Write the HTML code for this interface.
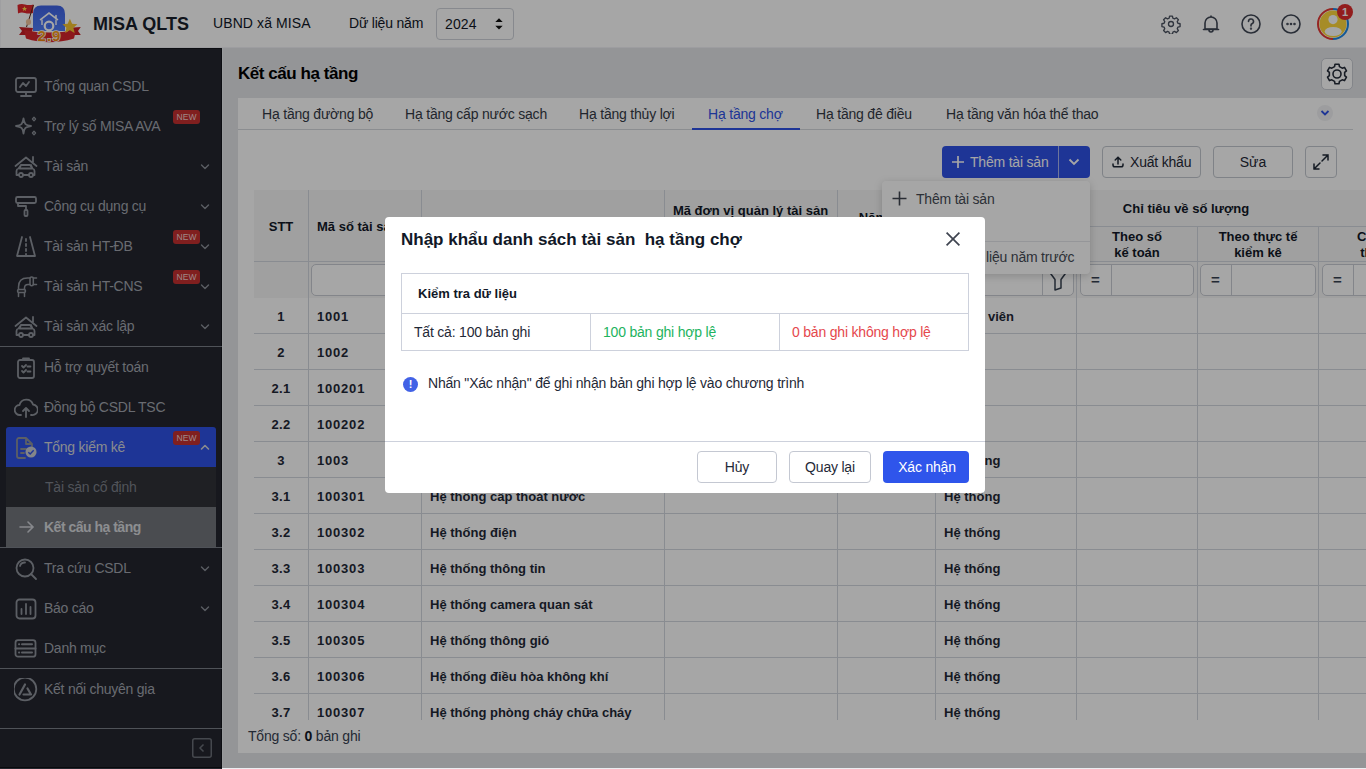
<!DOCTYPE html>
<html><head><meta charset="utf-8">
<style>
*{box-sizing:border-box;margin:0;padding:0}
html,body{width:1366px;height:769px;overflow:hidden;background:#fff;font-family:"Liberation Sans",sans-serif;color:#1f2937}
.a{position:absolute;white-space:nowrap}
#header{position:absolute;left:0;top:0;width:1366px;height:48px;background:#fff;border-bottom:1px solid #f1f2f6}
#side{position:absolute;left:0;top:48px;width:222px;height:721px;background:#24262e}
#content{position:absolute;left:222px;top:48px;width:1144px;height:721px;background:#e3e5e9}
.si{position:absolute;left:0;width:222px;height:40px;color:#a1a5ae;font-size:14px}
.si .t{position:absolute;left:44px;top:0;line-height:40px;letter-spacing:-.25px}
.si svg{position:absolute;left:14px;top:9px}
.si .chev{left:200px;top:17px}
.sdiv{position:absolute;left:0;width:222px;height:1px;background:#7a7e87}
.new{position:absolute;left:173px;top:4px;width:27px;height:14px;border-radius:3px;background:#c53030;color:#f3d0d0;font-size:8.5px;line-height:14px;text-align:center}
#overlay{position:absolute;left:0;top:0;width:1366px;height:768px;background:rgba(0,0,0,.35)}
#modal{position:absolute;left:385px;top:217px;width:600px;height:276px;background:#fff;border-radius:4px}
</style></head><body>
<div id="header">
<svg class="a" style="left:0;top:0" width="90" height="47" viewBox="0 0 90 47">
<defs><linearGradient id="lg1" x1="0" y1="0" x2="0" y2="1"><stop offset="0" stop-color="#3f63e6"/><stop offset="1" stop-color="#4f7cf6"/></linearGradient>
<linearGradient id="lg2" x1="0" y1="0" x2="0" y2="1"><stop offset="0" stop-color="#ffb020"/><stop offset="1" stop-color="#f07d0a"/></linearGradient></defs>
<path d="M17.5 5 Q21 3.5 25 4.5 Q29 5.5 33.5 4.5 L33 13 Q28.5 14 25 13 Q21 12 18 13.5 Z" fill="#e0262b"/>
<path d="M24.5 6.3 l.8 1.6 1.7.2 -1.3 1.1 .4 1.7 -1.6-.9 -1.6.9 .4-1.7 -1.3-1.1 1.7-.2z" fill="#ffd84a"/>
<line x1="33.5" y1="5" x2="26.5" y2="27" stroke="#5a2a16" stroke-width="1"/>
<ellipse cx="28.5" cy="22" rx="2.6" ry="3" fill="#f2c49d"/>
<path d="M33 14 Q33 5.5 41 5.5 H57 Q65 5.5 65 14 V31 H33 Z" fill="url(#lg1)"/>
<path d="M40.5 19.6 L49 13 L57.5 19.6 M56 15.5 v2.5" fill="none" stroke="#fff" stroke-width="1.6" stroke-linecap="round"/>
<path d="M42 19.5 V25 M56 19.5 V25" fill="none" stroke="#fff" stroke-width="1.4"/>
<circle cx="49" cy="26" r="4.3" fill="none" stroke="#fff" stroke-width="2.2"/>
<circle cx="49" cy="26" r="1.1" fill="#3f63e6"/>
<path d="M19 27 L33 28 L31 35 L19 35 L22 31 Z" fill="#c81e25"/>
<path d="M80.8 27 L67 28 L69 35 L80.8 35 L78 31 Z" fill="#c81e25"/>
<path d="M24 30 Q49 35 76 30 L74 38.5 Q49 46 26 38.5 Z" fill="#d7262b"/>
<path d="M69.9 18.8 l2.2 4.9 5.3.5 -4 3.6 1.2 5.2 -4.7-2.8 -4.7 2.8 1.2-5.2 -4-3.6 5.3-.5z" fill="#f6c330"/>
<text x="49.5" y="40.5" text-anchor="middle" font-family="Liberation Sans" font-weight="700" font-size="15" fill="url(#lg2)" stroke="#fff" stroke-width="1.5" paint-order="stroke" letter-spacing="1">2.9</text>
</svg>
<div class="a" style="left:93px;top:1px;line-height:47px;font-size:18px;font-weight:700;color:#1a1f2b;letter-spacing:0">MISA QLTS</div>
<div class="a" style="left:213px;top:0;line-height:47px;font-size:14px;color:#111827;letter-spacing:.1px">UBND xã MISA</div>
<div class="a" style="left:349px;top:0;line-height:47px;font-size:14px;color:#111827;letter-spacing:-.2px">Dữ liệu năm</div>
<div class="a" style="left:436px;top:8px;width:78px;height:32px;border:1px solid #cfd3da;border-radius:4px;background:#fff"></div>
<div class="a" style="left:445px;top:1px;line-height:47px;font-size:14px;color:#111827;letter-spacing:.1px">2024</div>
<svg class="a" style="left:494px;top:17px" width="10" height="14" viewBox="0 0 10 14"><path d="M1.3 5 L5 1.2 L8.7 5Z M1.3 8.8 L5 12.6 L8.7 8.8Z" fill="#111"/></svg>
<svg class="a" style="left:1161px;top:14px" width="20" height="20" viewBox="0 0 24 24" fill="none" stroke="#4b5260" stroke-width="1.6"><path d="M10.3 2.5h3.4l.6 2.6 1.9.8 2.3-1.4 2.4 2.4-1.4 2.3.8 1.9 2.6.6v3.4l-2.6.6-.8 1.9 1.4 2.3-2.4 2.4-2.3-1.4-1.9.8-.6 2.6h-3.4l-.6-2.6-1.9-.8-2.3 1.4-2.4-2.4 1.4-2.3-.8-1.9-2.6-.6v-3.4l2.6-.6.8-1.9-1.4-2.3 2.4-2.4 2.3 1.4 1.9-.8z" stroke-linejoin="round"/><circle cx="12" cy="12" r="3"/></svg>
<svg class="a" style="left:1201px;top:14px" width="20" height="20" viewBox="0 0 20 20" fill="none" stroke="#404755" stroke-width="1.6"><path d="M4 15 V9 a6 6 0 0 1 12 0 V15 Z" stroke-linejoin="round"/><path d="M2.5 15.5 H17.5" stroke-linecap="round"/><path d="M8 16 a2 2 0 0 0 4 0"/><path d="M10 1.5 V3"/></svg>
<svg class="a" style="left:1241px;top:14px" width="20" height="20" viewBox="0 0 20 20" fill="none" stroke="#404755" stroke-width="1.6"><circle cx="10" cy="10" r="9"/><path d="M7.5 7.5 a2.5 2.5 0 1 1 3.5 2.3 c-.7.3-1 .8-1 1.5 V12" stroke-linecap="round"/><circle cx="10" cy="14.6" r=".4" fill="#374151"/></svg>
<svg class="a" style="left:1281px;top:14px" width="20" height="20" viewBox="0 0 20 20" fill="none" stroke="#404755" stroke-width="1.6"><circle cx="10" cy="10" r="9"/><circle cx="6.5" cy="10" r=".5" fill="#374151"/><circle cx="10" cy="10" r=".5" fill="#374151"/><circle cx="13.5" cy="10" r=".5" fill="#374151"/></svg>
<svg class="a" style="left:1317px;top:8px" width="32" height="32" viewBox="0 0 32 32">
  <path d="M16 1 A15 15 0 0 1 16 31" fill="none" stroke="#1e88e5" stroke-width="2"/>
  <path d="M16 31 A15 15 0 0 1 16 1" fill="none" stroke="#e53935" stroke-width="2"/>
  <circle cx="16" cy="16" r="13.5" fill="#ffd83d"/>
  <circle cx="16" cy="11.6" r="4.6" fill="#fff"/>
  <ellipse cx="16.2" cy="23.5" rx="8.5" ry="4.6" fill="#fff"/>
</svg>
<div class="a" style="left:1337px;top:4px;width:16px;height:16px;border-radius:50%;background:#e02d2d;color:#fff;font-size:11px;font-weight:700;line-height:16px;text-align:center;font-family:'Liberation Sans',sans-serif">1</div>
</div>
<div id="side"><div class="a" style="left:0;top:0;width:222px;height:1px;background:#14161c"></div><div class="a" style="left:221px;top:0;width:1px;height:721px;background:#14161c"></div><div class="si" style="top:18px"><svg style="left:14px;top:9px" width="24" height="24" viewBox="0 0 24 24" fill="none" stroke="#8e929b" stroke-width="1.8" stroke-linecap="round" stroke-linejoin="round"><rect x="2" y="3" width="20" height="14" rx="2"/><path d="M12 17v4M7 21h10M6 12l3-4 3 3 3-4"/></svg><span class="t">Tổng quan CSDL</span></div><div class="si" style="top:58px"><svg style="left:14px;top:9px" width="24" height="24" viewBox="0 0 24 24" fill="none" stroke="#8e929b" stroke-width="1.8" stroke-linecap="round" stroke-linejoin="round"><path d="M9.5 3.5 C10.3 9 11.5 10.2 17 11 C11.5 11.8 10.3 13 9.5 18.5 C8.7 13 7.5 11.8 2 11 C7.5 10.2 8.7 9 9.5 3.5Z"/><path d="M20 2.2 l1.6 1.8 -1.6 1.8 -1.6-1.8z M20 16.2 l1.6 1.8 -1.6 1.8 -1.6-1.8z" stroke-width="1.2"/></svg><span class="t">Trợ lý số MISA AVA</span><span class="new">NEW</span></div><div class="si" style="top:98px"><svg style="left:14px;top:9px" width="24" height="24" viewBox="0 0 24 24" fill="none" stroke="#8e929b" stroke-width="1.8" stroke-linecap="round" stroke-linejoin="round"><path d="M1.5 11 L12 2.5 L22.5 11M19 2v5"/><path d="M2.5 20 v-4 q0-2 2-2.5 l2.5-3.5 h9 l2.5 3.5 q2 .5 2 2.5 v4 z M7 10 l-1.5 3.5 h13 L17 10"/><circle cx="7" cy="20" r="2" fill="#24262e"/><circle cx="17" cy="20" r="2" fill="#24262e"/></svg><span class="t">Tài sản</span><svg class="chev" width="10" height="8" viewBox="0 0 10 8"><path d="M1.5 2 L5 5.5 L8.5 2" fill="none" stroke="#8b8f98" stroke-width="1.4" stroke-linecap="round" stroke-linejoin="round"/></svg></div><div class="si" style="top:138px"><svg style="left:14px;top:9px" width="24" height="24" viewBox="0 0 24 24" fill="none" stroke="#8e929b" stroke-width="1.8" stroke-linecap="round" stroke-linejoin="round"><rect x="2" y="2" width="20" height="6" rx="1.5"/><path d="M4 8v3h8v4"/><rect x="10.5" y="15" width="3" height="6" rx="1"/></svg><span class="t">Công cụ dụng cụ</span><svg class="chev" width="10" height="8" viewBox="0 0 10 8"><path d="M1.5 2 L5 5.5 L8.5 2" fill="none" stroke="#8b8f98" stroke-width="1.4" stroke-linecap="round" stroke-linejoin="round"/></svg></div><div class="si" style="top:178px"><svg style="left:14px;top:9px" width="24" height="24" viewBox="0 0 24 24" fill="none" stroke="#8e929b" stroke-width="1.8" stroke-linecap="round" stroke-linejoin="round"><path d="M8 2 L3 21 H21 L16 2"/><path d="M12 4v2M12 9v2M12 14v2M12 19v1"/></svg><span class="t">Tài sản HT-ĐB</span><span class="new">NEW</span><svg class="chev" width="10" height="8" viewBox="0 0 10 8"><path d="M1.5 2 L5 5.5 L8.5 2" fill="none" stroke="#8b8f98" stroke-width="1.4" stroke-linecap="round" stroke-linejoin="round"/></svg></div><div class="si" style="top:218px"><svg style="left:14px;top:9px" width="24" height="24" viewBox="0 0 24 24" fill="none" stroke="#8e929b" stroke-width="1.8" stroke-linecap="round" stroke-linejoin="round"><g stroke-width="1.5"><path d="M4.5 14.5 V12 Q4.5 3 13.5 3 H16 M10.5 14.5 V13 Q10.5 9.5 14 9.5 H16"/><rect x="16" y="2" width="3.3" height="8.8" rx="1.5"/><path d="M19.3 3 H22.5 M19.3 9.5 H22.5"/><rect x="3.5" y="14.5" width="8" height="3" rx="1.5"/><path d="M4.5 17.5 V21.5 M10.5 17.5 V21.5"/></g></svg><span class="t">Tài sản HT-CNS</span><span class="new">NEW</span><svg class="chev" width="10" height="8" viewBox="0 0 10 8"><path d="M1.5 2 L5 5.5 L8.5 2" fill="none" stroke="#8b8f98" stroke-width="1.4" stroke-linecap="round" stroke-linejoin="round"/></svg></div><div class="si" style="top:258px"><svg style="left:14px;top:9px" width="24" height="24" viewBox="0 0 24 24" fill="none" stroke="#8e929b" stroke-width="1.8" stroke-linecap="round" stroke-linejoin="round"><path d="M1.5 11 L12 2.5 L22.5 11M19 2v5"/><path d="M2.5 20 v-4 q0-2 2-2.5 l2.5-3.5 h9 l2.5 3.5 q2 .5 2 2.5 v4 z M7 10 l-1.5 3.5 h13 L17 10"/><circle cx="7" cy="20" r="2" fill="#24262e"/><circle cx="17" cy="20" r="2" fill="#24262e"/></svg><span class="t">Tài sản xác lập</span><svg class="chev" width="10" height="8" viewBox="0 0 10 8"><path d="M1.5 2 L5 5.5 L8.5 2" fill="none" stroke="#8b8f98" stroke-width="1.4" stroke-linecap="round" stroke-linejoin="round"/></svg></div><div class="sdiv" style="top:298px"></div><div class="si" style="top:299px"><svg style="left:14px;top:9px" width="24" height="24" viewBox="0 0 24 24" fill="none" stroke="#8e929b" stroke-width="1.8" stroke-linecap="round" stroke-linejoin="round"><rect x="4" y="4" width="16" height="18" rx="2"/><path d="M9 4 V2.5 h6 V4 M8 10 l1.5 1.5 2.5-2.5 M13.5 10.5h3 M8 15 l1.5 1.5 2.5-2.5 M13.5 15.5h3"/></svg><span class="t">Hỗ trợ quyết toán</span></div><div class="si" style="top:339px"><svg style="left:14px;top:9px" width="24" height="24" viewBox="0 0 24 24" fill="none" stroke="#8e929b" stroke-width="1.8" stroke-linecap="round" stroke-linejoin="round"><path d="M7 19 H6 a5 5 0 0 1-.5-10 A7 7 0 0 1 19 8.5 a5 5 0 0 1-1 10.5 h-1"/><path d="M12 21 v-9 M9 15 l3-3 3 3"/></svg><span class="t">Đồng bộ CSDL TSC</span></div><div class="a" style="left:6px;top:379px;width:210px;height:40px;background:#2f52e6;border-radius:3px 3px 0 0"></div><div class="a" style="left:6px;top:419px;width:210px;height:80px;background:#303238"></div><div class="a" style="left:6px;top:459px;width:210px;height:40px;background:#72757c"></div><div class="si" style="top:379px;color:#d3d6dc"><svg style="left:13px;top:9px" width="24" height="24" viewBox="0 0 24 24" fill="none" stroke="#8e929b" stroke-width="1.8" stroke-linecap="round" stroke-linejoin="round"><path d="M13 2 H6 a2 2 0 0 0-2 2 v16 a2 2 0 0 0 2 2 h6 M13 2 l6 6 v4 M13 2 v6 h6 M8 13h5 M8 17h3"/></svg><svg style="left:25px;top:19px" width="12" height="12" viewBox="0 0 13 13"><circle cx="6.5" cy="6.5" r="6" fill="#c9ccd4"/><path d="M3.6 6.7 l2 2 3.8-4" fill="none" stroke="#2f52e6" stroke-width="1.5"/></svg><span class="t">Tổng kiểm kê</span><span class="new">NEW</span><svg class="chev" style="top:16px" width="10" height="8" viewBox="0 0 10 8"><path d="M1.5 6 L5 2.5 L8.5 6" fill="none" stroke="#d3d6dc" stroke-width="1.6" stroke-linecap="round" stroke-linejoin="round"/></svg></div><div class="a" style="left:45px;top:419px;line-height:40px;font-size:14px;color:#7d818a;letter-spacing:-.22px">Tài sản cố định</div><svg class="a" style="left:19px;top:472px" width="16" height="14" viewBox="0 0 16 14" fill="none" stroke="#cfd2d8" stroke-width="1.6" stroke-linecap="round"><path d="M1 7h13M9 2l5 5-5 5"/></svg><div class="a" style="left:44px;top:459px;line-height:40px;font-size:14px;font-weight:700;color:#d8dade;letter-spacing:-.5px">Kết cấu hạ tầng</div><div class="sdiv" style="top:499px"></div><div class="si" style="top:500px"><svg style="left:14px;top:9px" width="24" height="24" viewBox="0 0 24 24" fill="none" stroke="#8e929b" stroke-width="1.8" stroke-linecap="round" stroke-linejoin="round"><circle cx="11" cy="11" r="8.5"/><path d="M17 17 l5 5 M6 9 a5 5 0 0 1 5-3.5"/></svg><span class="t">Tra cứu CSDL</span><svg class="chev" width="10" height="8" viewBox="0 0 10 8"><path d="M1.5 2 L5 5.5 L8.5 2" fill="none" stroke="#8b8f98" stroke-width="1.4" stroke-linecap="round" stroke-linejoin="round"/></svg></div><div class="si" style="top:540px"><svg style="left:14px;top:9px" width="24" height="24" viewBox="0 0 24 24" fill="none" stroke="#8e929b" stroke-width="1.8" stroke-linecap="round" stroke-linejoin="round"><rect x="2.5" y="2.5" width="19" height="19" rx="3"/><path d="M7.5 17v-5M12 17V7M16.5 17v-7"/></svg><span class="t">Báo cáo</span><svg class="chev" width="10" height="8" viewBox="0 0 10 8"><path d="M1.5 2 L5 5.5 L8.5 2" fill="none" stroke="#8b8f98" stroke-width="1.4" stroke-linecap="round" stroke-linejoin="round"/></svg></div><div class="si" style="top:580px"><svg style="left:14px;top:9px" width="24" height="24" viewBox="0 0 24 24" fill="none" stroke="#8e929b" stroke-width="1.8" stroke-linecap="round" stroke-linejoin="round"><rect x="1.5" y="3.2" width="20" height="16.5" rx="2.5"/><path d="M1.5 11.5h20M5 7.3h.2M5 15.6h.2M8 7.3h10M8 15.6h10" stroke-width="2"/></svg><span class="t">Danh mục</span></div><div class="sdiv" style="top:620px"></div><div class="si" style="top:621px"><svg style="left:14px;top:9px" width="24" height="24" viewBox="0 0 24 24" fill="none" stroke="#8e929b" stroke-width="1.8" stroke-linecap="round" stroke-linejoin="round"><circle cx="11" cy="11" r="11.3"/><path d="M5.5 16.5 L11 6.5 M9.5 16.5 H17 L13.5 10.5" stroke-width="2.2"/></svg><span class="t">Kết nối chuyên gia</span></div><div class="sdiv" style="top:680px"></div><svg class="a" style="left:192px;top:690px" width="20" height="20" viewBox="0 0 20 20" fill="none" stroke="#6b6f78" stroke-width="1.5"><rect x=".75" y=".75" width="18.5" height="18.5" rx="2"/><path d="M11.5 6.5 L8 10 l3.5 3.5"/></svg></div>
<div id="content"><div class="a" style="left:0;top:0;width:1px;height:721px;background:#eceef2"></div>
</div>
<div class="a" style="left:238px;top:62px;line-height:24px;font-size:17px;font-weight:700;color:#000;letter-spacing:-.45px">Kết cấu hạ tầng</div><div class="a" style="left:1321px;top:58px;width:32px;height:32px;border:1px solid #c9ccd3;border-radius:5px;background:#fff"></div><svg class="a" style="left:1326px;top:63px" width="22" height="22" viewBox="0 0 22 22" fill="none" stroke="#262d3a" stroke-width="1.6" stroke-linejoin="round"><path d="M8.55 3.59 L9.02 1.20 L12.98 1.20 L13.45 3.59 L16.19 5.18 L18.50 4.39 L20.48 7.81 L18.64 9.41 L18.64 12.59 L20.48 14.19 L18.50 17.61 L16.19 16.82 L13.45 18.41 L12.98 20.80 L9.02 20.80 L8.55 18.41 L5.81 16.82 L3.50 17.61 L1.52 14.19 L3.36 12.59 L3.36 9.41 L1.52 7.81 L3.50 4.39 L5.81 5.18Z"/><circle cx="11" cy="11" r="4"/></svg><div class="a" style="left:238px;top:98px;width:1128px;height:655px;background:#fff"></div><div class="a" style="left:238px;top:129px;width:1115px;height:1px;background:#d6d9de"></div><div class="a" style="left:262px;top:99px;line-height:31px;font-size:14px;color:#343a46;letter-spacing:-.2px">Hạ tầng đường bộ</div><div class="a" style="left:405px;top:99px;line-height:31px;font-size:14px;color:#343a46;letter-spacing:-.2px">Hạ tầng cấp nước sạch</div><div class="a" style="left:579px;top:99px;line-height:31px;font-size:14px;color:#343a46;letter-spacing:-.2px">Hạ tầng thủy lợi</div><div class="a" style="left:708px;top:99px;line-height:31px;font-size:14px;color:#2f52e6;letter-spacing:-.2px">Hạ tầng chợ</div><div class="a" style="left:816px;top:99px;line-height:31px;font-size:14px;color:#343a46;letter-spacing:-.2px">Hạ tầng đê điều</div><div class="a" style="left:946px;top:99px;line-height:31px;font-size:14px;color:#343a46;letter-spacing:-.2px">Hạ tầng văn hóa thể thao</div><div class="a" style="left:692px;top:128px;width:108px;height:2px;background:#2f52e6"></div><div class="a" style="left:1317px;top:105px;width:16px;height:16px;border-radius:50%;background:#f1f2f4"></div><svg class="a" style="left:1320px;top:109px" width="10" height="8" viewBox="0 0 10 8"><path d="M1.5 2 L5 5.5 L8.5 2" fill="none" stroke="#2f52e6" stroke-width="1.8"/></svg><div class="a" style="left:942px;top:146px;width:148px;height:32px;background:#2f52e6;border-radius:4px"></div><div class="a" style="left:1058px;top:146px;width:1px;height:32px;background:#aab6ee"></div><svg class="a" style="left:951px;top:155px" width="14" height="14" viewBox="0 0 14 14"><path d="M7 1v12M1 7h12" stroke="#fff" stroke-width="1.7"/></svg><div class="a" style="left:970px;top:146px;line-height:32px;font-size:14px;color:#fff;letter-spacing:-.2px">Thêm tài sản</div><svg class="a" style="left:1068px;top:158px" width="12" height="8" viewBox="0 0 12 8"><path d="M1.5 1.5 L6 6 L10.5 1.5" fill="none" stroke="#fff" stroke-width="1.8"/></svg><div class="a" style="left:1102px;top:146px;width:99px;height:32px;border:1px solid #c4c8cf;border-radius:4px;background:#fff"></div><svg class="a" style="left:1111px;top:154px" width="14" height="14" viewBox="0 0 14 14" fill="none" stroke="#1f2937" stroke-width="1.5" stroke-linecap="round"><path d="M7 10V3.5M4.2 6 7 3.2 9.8 6M2 10v1q0 1.8 1.8 1.8h6.4q1.8 0 1.8-1.8v-1"/></svg><div class="a" style="left:1130px;top:146px;line-height:32px;font-size:14px;color:#1f2937;letter-spacing:-.2px">Xuất khẩu</div><div class="a" style="left:1213px;top:146px;width:80px;height:32px;border:1px solid #c4c8cf;border-radius:4px;background:#fff;line-height:30px;text-align:center;font-size:14px;color:#1f2937">Sửa</div><div class="a" style="left:1305px;top:146px;width:32px;height:32px;border:1px solid #c4c8cf;border-radius:4px;background:#fff"></div><svg class="a" style="left:1311px;top:152px" width="20" height="20" viewBox="0 0 20 20" fill="none" stroke="#1f2937" stroke-width="1.5" stroke-linecap="round"><path d="M12 3h5v5M17 3l-6 6M8 17H3v-5M3 17l6-6"/></svg><div class="a" style="left:254px;top:190px;width:1112px;height:108px;background:#f6f6f6"></div><div class="a" style="left:308px;top:190px;width:1px;height:530px;background:#d3d7df"></div><div class="a" style="left:421px;top:190px;width:1px;height:530px;background:#d3d7df"></div><div class="a" style="left:664px;top:190px;width:1px;height:530px;background:#d3d7df"></div><div class="a" style="left:837px;top:190px;width:1px;height:530px;background:#d3d7df"></div><div class="a" style="left:935px;top:190px;width:1px;height:530px;background:#d3d7df"></div><div class="a" style="left:1076px;top:190px;width:1px;height:530px;background:#d3d7df"></div><div class="a" style="left:1197px;top:226px;width:1px;height:494px;background:#d3d7df"></div><div class="a" style="left:1318px;top:226px;width:1px;height:494px;background:#d3d7df"></div><div class="a" style="left:1076px;top:226px;width:290px;height:1px;background:#d3d7df"></div><div class="a" style="left:254px;top:261px;width:1112px;height:1px;background:#d3d7df"></div><div class="a" style="left:254px;top:333px;width:1112px;height:1px;background:#d3d7df"></div><div class="a" style="left:254px;top:369px;width:1112px;height:1px;background:#d3d7df"></div><div class="a" style="left:254px;top:405px;width:1112px;height:1px;background:#d3d7df"></div><div class="a" style="left:254px;top:441px;width:1112px;height:1px;background:#d3d7df"></div><div class="a" style="left:254px;top:477px;width:1112px;height:1px;background:#d3d7df"></div><div class="a" style="left:254px;top:513px;width:1112px;height:1px;background:#d3d7df"></div><div class="a" style="left:254px;top:549px;width:1112px;height:1px;background:#d3d7df"></div><div class="a" style="left:254px;top:585px;width:1112px;height:1px;background:#d3d7df"></div><div class="a" style="left:254px;top:621px;width:1112px;height:1px;background:#d3d7df"></div><div class="a" style="left:254px;top:657px;width:1112px;height:1px;background:#d3d7df"></div><div class="a" style="left:254px;top:693px;width:1112px;height:1px;background:#d3d7df"></div><div class="a" style="left:254px;top:216px;width:54px;text-align:center;line-height:22px;font-size:13px;font-weight:700;color:#111827">STT</div><div class="a" style="left:317px;top:216px;line-height:22px;font-size:13px;font-weight:700;color:#111827">Mã số tài sản</div><div class="a" style="left:421px;top:216px;width:243px;text-align:center;line-height:22px;font-size:13px;font-weight:700;color:#111827">Tên tài sản</div><div class="a" style="left:664px;top:203px;width:173px;text-align:center;line-height:16px;font-size:13px;font-weight:700;color:#111827">Mã đơn vị quản lý tài sản<br>cập nhật</div><div class="a" style="left:838px;top:210px;width:98px;text-align:center;line-height:16px;font-size:13px;font-weight:700;color:#111827">Năm đưa<br>vào sử dụng</div><div class="a" style="left:936px;top:216px;width:141px;text-align:center;line-height:22px;font-size:13px;font-weight:700;color:#111827">Loại tài sản</div><div class="a" style="left:1076px;top:198px;width:220px;text-align:center;line-height:22px;font-size:13px;font-weight:700;color:#111827">Chỉ tiêu về số lượng</div><div class="a" style="left:1077px;top:229px;width:120px;text-align:center;line-height:16px;font-size:13px;font-weight:700;color:#111827">Theo số<br>kế toán</div><div class="a" style="left:1197px;top:229px;width:122px;text-align:center;line-height:16px;font-size:13px;font-weight:700;color:#111827">Theo thực tế<br>kiểm kê</div><div class="a" style="left:1319px;top:229px;width:146px;text-align:center;line-height:16px;font-size:13px;font-weight:700;color:#111827">Chênh lệch<br>thừa thiếu</div><div class="a" style="left:311px;top:264px;width:108px;height:32px;border:1px solid #c9cdd4;border-radius:5px;background:#fff"></div><div class="a" style="left:425px;top:264px;width:236px;height:32px;border:1px solid #c9cdd4;border-radius:5px;background:#fff"></div><div class="a" style="left:667px;top:264px;width:168px;height:32px;border:1px solid #c9cdd4;border-radius:5px;background:#fff"></div><div class="a" style="left:841px;top:264px;width:92px;height:32px;border:1px solid #c9cdd4;border-radius:5px;background:#fff"></div><div class="a" style="left:939px;top:264px;width:135px;height:32px;border:1px solid #c9cdd4;border-radius:5px;background:#fff"></div><div class="a" style="left:1042px;top:264px;width:1px;height:32px;background:#c9cdd4"></div><svg class="a" style="left:1048px;top:268px" width="20" height="24" viewBox="0 0 20 24" fill="none" stroke="#374151" stroke-width="1.5" stroke-linejoin="round"><path d="M1.5 4 L7 11.5 V22 L13 20 V11.5 L18.5 4"/></svg><div class="a" style="left:1080px;top:264px;width:114px;height:32px;border:1px solid #c9cdd4;border-radius:5px;background:#fff"></div><div class="a" style="left:1111px;top:264px;width:1px;height:32px;background:#c9cdd4"></div><div class="a" style="left:1080px;top:264px;width:31px;line-height:32px;text-align:center;font-size:15px;font-weight:700;color:#374151">=</div><div class="a" style="left:1200px;top:264px;width:116px;height:32px;border:1px solid #c9cdd4;border-radius:5px;background:#fff"></div><div class="a" style="left:1231px;top:264px;width:1px;height:32px;background:#c9cdd4"></div><div class="a" style="left:1200px;top:264px;width:31px;line-height:32px;text-align:center;font-size:15px;font-weight:700;color:#374151">=</div><div class="a" style="left:1322px;top:264px;width:118px;height:32px;border:1px solid #c9cdd4;border-radius:5px;background:#fff"></div><div class="a" style="left:1353px;top:264px;width:1px;height:32px;background:#c9cdd4"></div><div class="a" style="left:1322px;top:264px;width:31px;line-height:32px;text-align:center;font-size:15px;font-weight:700;color:#374151">=</div><div class="a" style="left:254px;top:299px;width:54px;text-align:center;line-height:36px;font-size:13px;font-weight:700;color:#1f2937;letter-spacing:.3px">1</div><div class="a" style="left:317px;top:299px;line-height:36px;font-size:13px;font-weight:700;color:#1f2937;letter-spacing:.8px">1001</div><div class="a" style="left:430px;top:299px;line-height:36px;font-size:13px;font-weight:700;color:#1f2937">Chợ trung tâm</div><div class="a" style="left:988px;top:299px;line-height:36px;font-size:13px;font-weight:700;color:#1f2937">viên</div><div class="a" style="left:254px;top:335px;width:54px;text-align:center;line-height:36px;font-size:13px;font-weight:700;color:#1f2937;letter-spacing:.3px">2</div><div class="a" style="left:317px;top:335px;line-height:36px;font-size:13px;font-weight:700;color:#1f2937;letter-spacing:.8px">1002</div><div class="a" style="left:430px;top:335px;line-height:36px;font-size:13px;font-weight:700;color:#1f2937">Chợ xã</div><div class="a" style="left:254px;top:371px;width:54px;text-align:center;line-height:36px;font-size:13px;font-weight:700;color:#1f2937;letter-spacing:.3px">2.1</div><div class="a" style="left:317px;top:371px;line-height:36px;font-size:13px;font-weight:700;color:#1f2937;letter-spacing:.8px">100201</div><div class="a" style="left:430px;top:371px;line-height:36px;font-size:13px;font-weight:700;color:#1f2937">Nhà lồng chợ</div><div class="a" style="left:254px;top:407px;width:54px;text-align:center;line-height:36px;font-size:13px;font-weight:700;color:#1f2937;letter-spacing:.3px">2.2</div><div class="a" style="left:317px;top:407px;line-height:36px;font-size:13px;font-weight:700;color:#1f2937;letter-spacing:.8px">100202</div><div class="a" style="left:430px;top:407px;line-height:36px;font-size:13px;font-weight:700;color:#1f2937">Ki-ốt</div><div class="a" style="left:254px;top:443px;width:54px;text-align:center;line-height:36px;font-size:13px;font-weight:700;color:#1f2937;letter-spacing:.3px">3</div><div class="a" style="left:317px;top:443px;line-height:36px;font-size:13px;font-weight:700;color:#1f2937;letter-spacing:.8px">1003</div><div class="a" style="left:430px;top:443px;line-height:36px;font-size:13px;font-weight:700;color:#1f2937">Hệ thống kỹ thuật</div><div class="a" style="left:944px;top:443px;line-height:36px;font-size:13px;font-weight:700;color:#1f2937">Hệ thống</div><div class="a" style="left:254px;top:479px;width:54px;text-align:center;line-height:36px;font-size:13px;font-weight:700;color:#1f2937;letter-spacing:.3px">3.1</div><div class="a" style="left:317px;top:479px;line-height:36px;font-size:13px;font-weight:700;color:#1f2937;letter-spacing:.8px">100301</div><div class="a" style="left:430px;top:479px;line-height:36px;font-size:13px;font-weight:700;color:#1f2937">Hệ thống cấp thoát nước</div><div class="a" style="left:944px;top:479px;line-height:36px;font-size:13px;font-weight:700;color:#1f2937">Hệ thống</div><div class="a" style="left:254px;top:515px;width:54px;text-align:center;line-height:36px;font-size:13px;font-weight:700;color:#1f2937;letter-spacing:.3px">3.2</div><div class="a" style="left:317px;top:515px;line-height:36px;font-size:13px;font-weight:700;color:#1f2937;letter-spacing:.8px">100302</div><div class="a" style="left:430px;top:515px;line-height:36px;font-size:13px;font-weight:700;color:#1f2937">Hệ thống điện</div><div class="a" style="left:944px;top:515px;line-height:36px;font-size:13px;font-weight:700;color:#1f2937">Hệ thống</div><div class="a" style="left:254px;top:551px;width:54px;text-align:center;line-height:36px;font-size:13px;font-weight:700;color:#1f2937;letter-spacing:.3px">3.3</div><div class="a" style="left:317px;top:551px;line-height:36px;font-size:13px;font-weight:700;color:#1f2937;letter-spacing:.8px">100303</div><div class="a" style="left:430px;top:551px;line-height:36px;font-size:13px;font-weight:700;color:#1f2937">Hệ thống thông tin</div><div class="a" style="left:944px;top:551px;line-height:36px;font-size:13px;font-weight:700;color:#1f2937">Hệ thống</div><div class="a" style="left:254px;top:587px;width:54px;text-align:center;line-height:36px;font-size:13px;font-weight:700;color:#1f2937;letter-spacing:.3px">3.4</div><div class="a" style="left:317px;top:587px;line-height:36px;font-size:13px;font-weight:700;color:#1f2937;letter-spacing:.8px">100304</div><div class="a" style="left:430px;top:587px;line-height:36px;font-size:13px;font-weight:700;color:#1f2937">Hệ thống camera quan sát</div><div class="a" style="left:944px;top:587px;line-height:36px;font-size:13px;font-weight:700;color:#1f2937">Hệ thống</div><div class="a" style="left:254px;top:623px;width:54px;text-align:center;line-height:36px;font-size:13px;font-weight:700;color:#1f2937;letter-spacing:.3px">3.5</div><div class="a" style="left:317px;top:623px;line-height:36px;font-size:13px;font-weight:700;color:#1f2937;letter-spacing:.8px">100305</div><div class="a" style="left:430px;top:623px;line-height:36px;font-size:13px;font-weight:700;color:#1f2937">Hệ thống thông gió</div><div class="a" style="left:944px;top:623px;line-height:36px;font-size:13px;font-weight:700;color:#1f2937">Hệ thống</div><div class="a" style="left:254px;top:659px;width:54px;text-align:center;line-height:36px;font-size:13px;font-weight:700;color:#1f2937;letter-spacing:.3px">3.6</div><div class="a" style="left:317px;top:659px;line-height:36px;font-size:13px;font-weight:700;color:#1f2937;letter-spacing:.8px">100306</div><div class="a" style="left:430px;top:659px;line-height:36px;font-size:13px;font-weight:700;color:#1f2937">Hệ thống điều hòa không khí</div><div class="a" style="left:944px;top:659px;line-height:36px;font-size:13px;font-weight:700;color:#1f2937">Hệ thống</div><div class="a" style="left:254px;top:695px;width:54px;text-align:center;line-height:36px;font-size:13px;font-weight:700;color:#1f2937;letter-spacing:.3px">3.7</div><div class="a" style="left:317px;top:695px;line-height:36px;font-size:13px;font-weight:700;color:#1f2937;letter-spacing:.8px">100307</div><div class="a" style="left:430px;top:695px;line-height:36px;font-size:13px;font-weight:700;color:#1f2937">Hệ thống phòng cháy chữa cháy</div><div class="a" style="left:944px;top:695px;line-height:36px;font-size:13px;font-weight:700;color:#1f2937">Hệ thống</div><div class="a" style="left:238px;top:720px;width:1128px;height:33px;background:#fff"></div><div class="a" style="left:248px;top:724px;line-height:24px;font-size:14px;color:#374151;letter-spacing:-.2px">Tổng số: <b style="color:#111827">0</b> bản ghi</div><div class="a" style="left:882px;top:181px;width:208px;height:93px;background:#fff;border-radius:4px;box-shadow:0 2px 8px rgba(0,0,0,.18)"></div><svg class="a" style="left:892px;top:191px" width="15" height="15" viewBox="0 0 15 15"><path d="M7.5 .5v14M.5 7.5h14" stroke="#404650" stroke-width="1.6"/></svg><div class="a" style="left:916px;top:188px;line-height:22px;font-size:14px;color:#454b55;letter-spacing:-.2px">Thêm tài sản</div><div class="a" style="left:882px;top:241px;width:208px;height:1px;background:#e5e7eb"></div><div class="a" style="left:940px;top:246px;line-height:22px;font-size:14px;color:#454b55;letter-spacing:-.2px">Lấy dữ liệu năm trước</div>
<div class="a" style="left:0;top:0;width:1px;height:47px;background:#f4f5f8"></div><div class="a" style="left:0;top:767px;width:222px;height:1px;background:#0e1014"></div><div class="a" style="left:222px;top:768px;width:1144px;height:1px;background:#eceef2"></div><div id="overlay"></div>
<div id="modal"><div class="a" style="left:16px;top:11px;line-height:24px;font-size:17px;font-weight:700;color:#111827">Nhập khẩu danh sách tài sản&nbsp; hạ tầng chợ</div><svg class="a" style="left:559px;top:13px" width="18" height="18" viewBox="0 0 18 18"><path d="M2.6 2.6L15.4 15.4M15.4 2.6L2.6 15.4" stroke="#3f4450" stroke-width="1.7"/></svg><div class="a" style="left:16px;top:56px;width:568px;height:78px;border:1px solid #cdd1dc"></div><div class="a" style="left:16px;top:96px;width:568px;height:1px;background:#cdd1dc"></div><div class="a" style="left:205px;top:96px;width:1px;height:38px;background:#cdd1dc"></div><div class="a" style="left:394px;top:96px;width:1px;height:38px;background:#cdd1dc"></div><div class="a" style="left:33px;top:57px;line-height:40px;font-size:13px;font-weight:700;color:#111827">Kiểm tra dữ liệu</div><div class="a" style="left:29px;top:96px;line-height:38px;font-size:14px;color:#1f2937;letter-spacing:-.2px">Tất cả: 100 bản ghi</div><div class="a" style="left:218px;top:96px;line-height:38px;font-size:14px;color:#22b35e;letter-spacing:-.2px">100 bản ghi hợp lệ</div><div class="a" style="left:407px;top:96px;line-height:38px;font-size:14px;color:#e5484d;letter-spacing:-.2px">0 bản ghi không hợp lệ</div><div class="a" style="left:18px;top:160px;width:15px;height:15px;border-radius:50%;background:#4262e6;color:#fff;font-size:11px;font-weight:700;line-height:15px;text-align:center">!</div><div class="a" style="left:43px;top:155px;line-height:22px;font-size:14px;color:#1f2937;letter-spacing:-.2px">Nhấn "Xác nhận" để ghi nhận bản ghi hợp lệ vào chương trình</div><div class="a" style="left:0;top:224px;width:600px;height:1px;background:#cdd1dc"></div><div class="a" style="left:312px;top:234px;width:80px;height:32px;border:1px solid #c4c8d2;border-radius:4px;background:#fff;text-align:center;line-height:30px;font-size:14px;color:#1f2937;letter-spacing:-.2px">Hủy</div><div class="a" style="left:404px;top:234px;width:82px;height:32px;border:1px solid #c4c8d2;border-radius:4px;background:#fff;text-align:center;line-height:30px;font-size:14px;color:#1f2937;letter-spacing:-.2px">Quay lại</div><div class="a" style="left:498px;top:234px;width:86px;height:32px;border-radius:4px;background:#2f55eb;text-align:center;line-height:32px;font-size:14px;color:#fff;letter-spacing:-.2px;text-indent:2px">Xác nhận</div></div>
</body></html>
